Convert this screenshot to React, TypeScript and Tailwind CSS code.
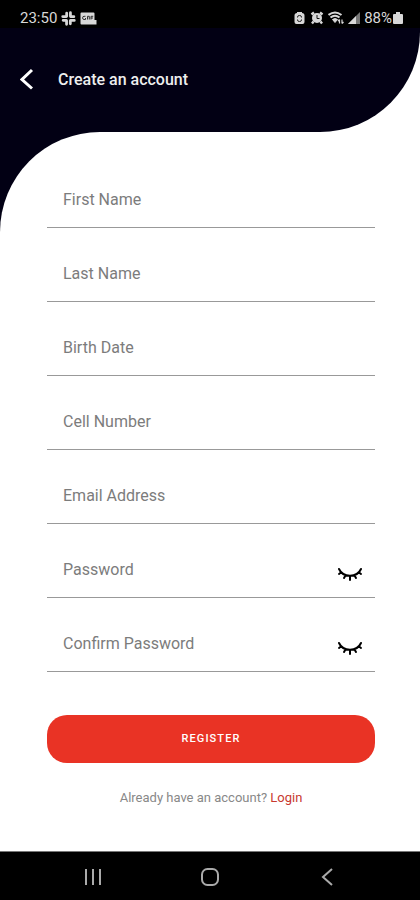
import React from 'react';

const fields = [
  { id: 'first-name', label: 'First Name', type: 'text' },
  { id: 'last-name', label: 'Last Name', type: 'text' },
  { id: 'birth-date', label: 'Birth Date', type: 'text' },
  { id: 'cell-number', label: 'Cell Number', type: 'tel' },
  { id: 'email', label: 'Email Address', type: 'email' },
  { id: 'password', label: 'Password', type: 'password' },
  { id: 'confirm-password', label: 'Confirm Password', type: 'password' },
];

function StatusBar() {
  return (
    <div className="flex h-7 items-center justify-between bg-black pt-2 pr-4 pl-5 text-[15px] text-[#d8d8d8]">
      <div className="flex items-center gap-1">
        <span>23:50</span>
        <svg width="15" height="15" viewBox="0 0 14 14" fill="none" stroke="currentColor" strokeWidth="2.6" strokeLinecap="round">
          <path d="M5.3 4.9V2M5 5.2H1.6M9.1 5.3H12M8.8 5V1.6M8.7 9.1V12M9 8.8h3.4M4.9 8.7H2M5.2 9v3.4" />
        </svg>
        <svg width="17" height="13" viewBox="0 0 17 13">
          <path d="M1.5.5h12q1 0 1 1V8h2v4.5h-15q-1 0-1-1v-10q0-1 1-1z" fill="currentColor" />
          <path d="M5.500 4.300H4q-1.400 0-1.400 1.600T4 7.500h1.500V6M7.500 7.500V4.300h1.800v3.200M11 7.500V4.300h2.200M11 6h2" fill="none" stroke="#333" strokeWidth="1" />
        </svg>
      </div>
      <div className="flex items-center">
        <svg className="mr-1" width="13" height="14" viewBox="0 0 13 14">
          <path d="M4 1h5v1q2.500 0 2.500 2.500V11Q11.500 13 9.500 13h-6q-2 0-2-2V4.500Q1.500 2 4 2z" fill="currentColor" />
          <path d="M4.500 6.500V6q0-1.500 2-1.500t2 1.500v.500M4.500 8.500V9q0 1.500 2 1.500t2-1.500v-.500" fill="none" stroke="#222" />
        </svg>
        <svg className="mr-1" width="14" height="14" viewBox="0 0 14 14">
          <circle cx="7" cy="7" r="5" fill="currentColor" />
          <path d="M1.500 3.500l2.500-2M12.500 3.500L10 1.500M3.500 10.500L2 12.500M10.500 10.500L12 12.500" stroke="currentColor" strokeWidth="2.400" />
          <path d="M7 4v3.500h2.500" fill="none" stroke="#111" />
        </svg>
        <svg className="mr-1" width="16" height="14" viewBox="0 0 16 14" fill="none" stroke="currentColor">
          <path d="M.500 4q6.500-5 13 0M2.500 6.500q4.500-3.500 9 0" strokeWidth="2" />
          <path d="M4.500 8.500q2.500-2 5 0L7 11.500z" fill="currentColor" />
          <path d="M11.500 12.500v-4M10 10l1.500-1.500M14 8.500v4M15.500 11L14 12.500" strokeWidth="1.200" />
        </svg>
        <svg className="mr-1" width="12" height="14" viewBox="0 0 12 14">
          <path d="M0 13L12 1v12z" fill="#777" />
          <path d="M0 13L8 5v8z" fill="currentColor" />
        </svg>
        <span>88%</span>
        <svg width="12" height="14" viewBox="0 0 12 14" fill="currentColor">
          <path d="M4 1h4v2h2q1 0 1 1v8q0 1-1 1H2q-1 0-1-1V4q0-1 1-1h2z" />
        </svg>
      </div>
    </div>
  );
}

function ClosedEye() {
  return (
    <svg width="26" height="16" viewBox="0 0 26 16" fill="none" stroke="currentColor" strokeWidth="2" strokeLinecap="round">
      <path d="M2 2C6 11 20 11 24 2M4 5.500L2 7M8.500 8.500L7 11M13 9v4M17.500 8.500L19 11M22 5.500L24 7" />
    </svg>
  );
}

function NavBar() {
  return (
    <nav className="grid h-[49px] grid-cols-3 items-center border-t border-[#777] bg-black px-[34px] pt-0.5 text-[#aaa]">
      <button type="button" aria-label="Recent apps" className="flex justify-center">
        <svg width="18" height="18" viewBox="0 0 18 18" stroke="currentColor" strokeWidth="2">
          <path d="M2 1v16M9 1v16M16 1v16" />
        </svg>
      </button>
      <button type="button" aria-label="Home" className="flex justify-center">
        <svg width="20" height="20" viewBox="0 0 20 20" fill="none" stroke="currentColor" strokeWidth="2">
          <rect x="2" y="2" width="16" height="16" rx="5.500" />
        </svg>
      </button>
      <button type="button" aria-label="Back" className="flex justify-center">
        <svg width="12" height="18" viewBox="0 0 12 18" fill="none" stroke="currentColor" strokeWidth="2">
          <path d="M11 1L2 9l9 8" />
        </svg>
      </button>
    </nav>
  );
}

export default function App() {
  return (
    <div className="flex min-h-screen flex-col bg-white font-[Roboto,sans-serif]">
      <div className="overflow-hidden rounded-br-[100px] bg-[#020014]">
        <StatusBar />
        <header className="flex h-[104px] items-start gap-6 px-5 pt-10">
          <button type="button" aria-label="Go back" className="text-white">
            <svg width="14" height="22" viewBox="0 0 14 22" fill="none" stroke="currentColor" strokeWidth="3">
              <path d="M12 2L2 11.500l10 9" />
            </svg>
          </button>
          <h1 className="text-base leading-6 font-medium text-[#eee]">Create an account</h1>
        </header>
      </div>
      <div className="bg-[linear-gradient(#020014_100px,white_100px)]">
        <main className="rounded-tl-[100px] bg-white pt-[22px] pr-[45px] pl-[47px]">
          <form>
            {fields.map((field) => (
              <div key={field.id} className="flex h-[74px] items-end border-b border-[#999]">
                <input
                  id={field.id}
                  type={field.type}
                  aria-label={field.label}
                  placeholder={field.label}
                  className="h-14 w-full min-w-0 flex-1 bg-transparent px-4 text-base text-gray-900 outline-none placeholder:text-[#7c7c7c]"
                />
                {field.type === 'password' && (
                  <button type="button" aria-label="Show password" className="mr-3 mb-3.5 text-black">
                    <ClosedEye />
                  </button>
                )}
              </div>
            ))}
            <button
              type="submit"
              className="mt-[43px] h-12 w-full rounded-[20px] bg-[#e93325] pt-px text-[11px] font-medium tracking-widest text-white"
            >
              REGISTER
            </button>
          </form>
          <p className="mt-[27px] text-center text-[13px] leading-4 text-[#888]">
            Already have an account?{' '}
            <a href="#login" className="text-[#c8392f]">
              Login
            </a>
          </p>
        </main>
      </div>
      <div className="mt-auto">
        <NavBar />
      </div>
    </div>
  );
}
